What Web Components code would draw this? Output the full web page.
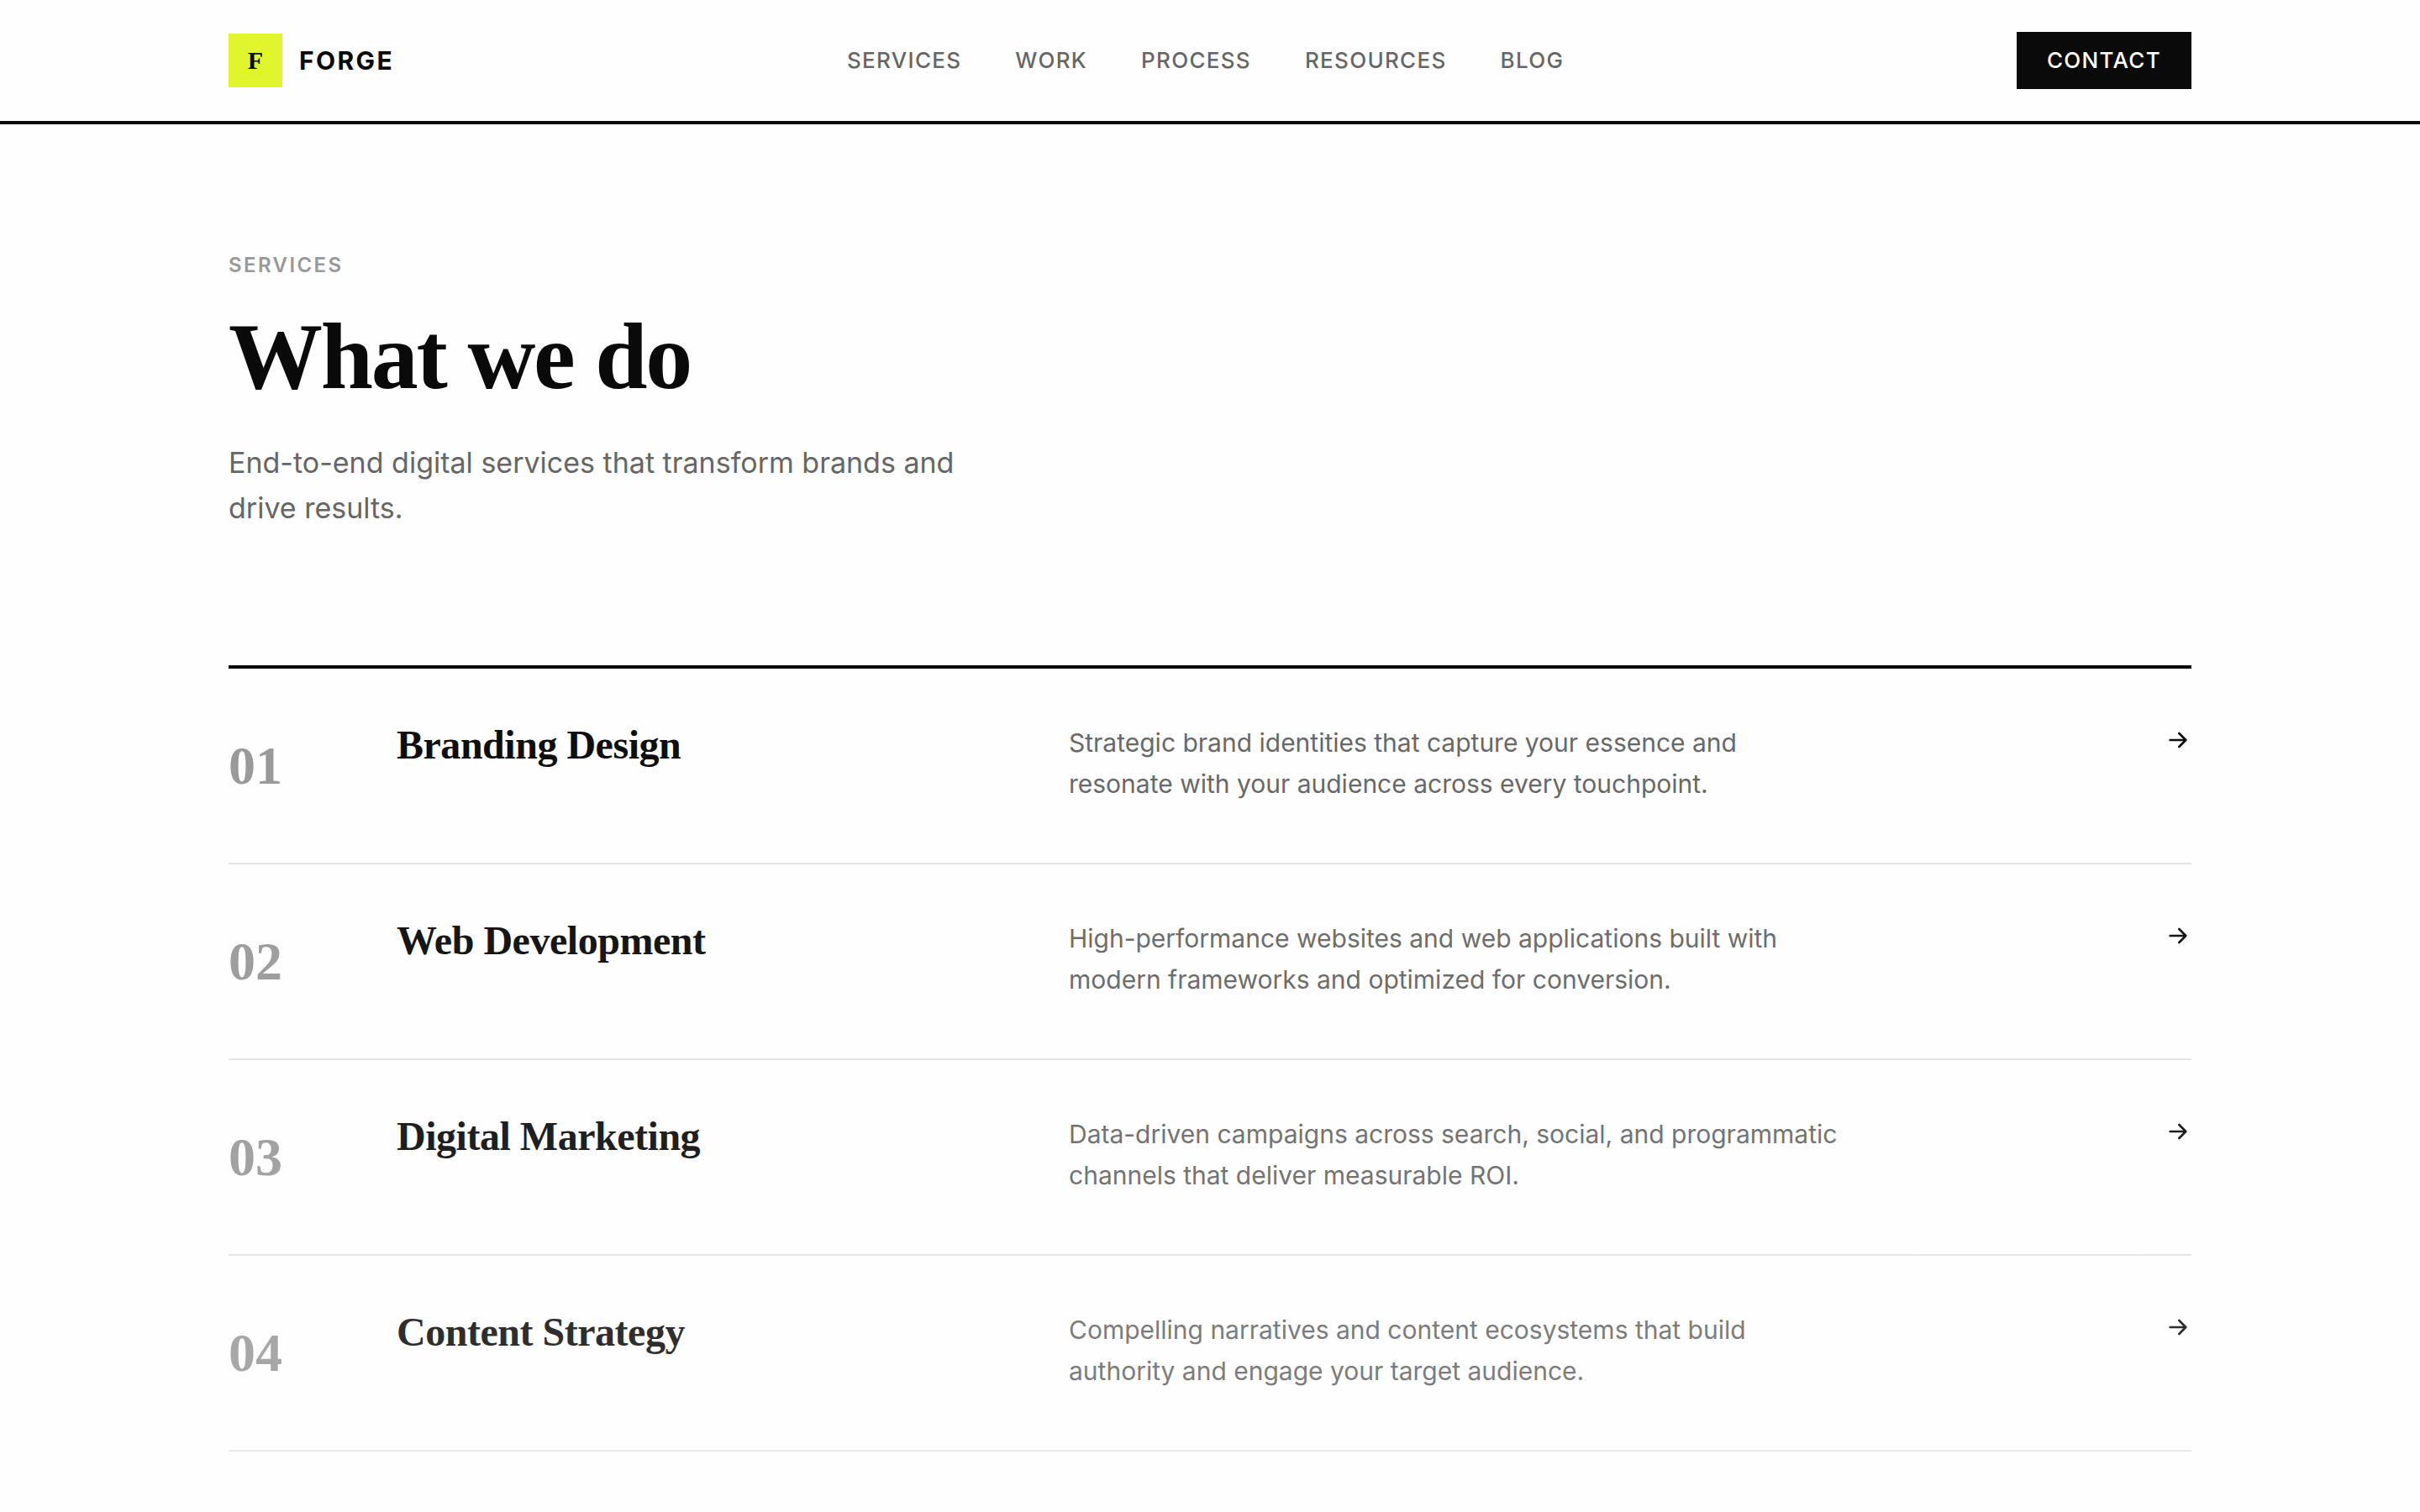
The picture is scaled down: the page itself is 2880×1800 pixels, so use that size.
<!DOCTYPE html>
<html lang="en">
<head>
<meta charset="utf-8">
<meta name="viewport" content="width=device-width, initial-scale=1">
<title>Forge – Services</title>
<style>
  :root {
    --ink: #0a0a0a;
    --muted: #666;
    --faint: #999;
    --line: #e2e2e2;
    --accent: #e1f52c;
    --paper: #fefefe;
    --serif: "Liberation Serif", serif;
  }
  body {
    margin: 0;
    background: var(--paper);
    color: var(--ink);
    font-family: Inter, sans-serif;
    -webkit-font-smoothing: antialiased;
    overflow-x: hidden;
  }
</style>
</head>
<body>
<forge-header>
  <forge-logo slot="logo">FORGE</forge-logo>
  <forge-link href="#services">SERVICES</forge-link>
  <forge-link href="#work">WORK</forge-link>
  <forge-link href="#process">PROCESS</forge-link>
  <forge-link href="#resources">RESOURCES</forge-link>
  <forge-link href="#blog">BLOG</forge-link>
  <forge-button slot="action">CONTACT</forge-button>
</forge-header>
<main>
  <forge-hero>
    <span slot="label">SERVICES</span>
    <span slot="title">What we do</span>
    End-to-end digital services that transform brands and drive results.
  </forge-hero>
  <forge-services>
    <forge-service number="01" name="Branding Design" style="--reveal: .98">Strategic brand identities that capture your essence and resonate with your audience across every touchpoint.</forge-service>
    <forge-service number="02" name="Web Development" style="--reveal: .95">High-performance websites and web applications built with modern frameworks and optimized for conversion.</forge-service>
    <forge-service number="03" name="Digital Marketing" style="--reveal: .91">Data-driven campaigns across search, social, and programmatic channels that deliver measurable ROI.</forge-service>
    <forge-service number="04" name="Content Strategy" style="--reveal: .85">Compelling narratives and content ecosystems that build authority and engage your target audience.</forge-service>
  </forge-services>
</main>

<script>
const define = (tag, markup) => customElements.define(tag, class extends HTMLElement {
  constructor() {
    super();
    this.attachShadow({ mode: 'open' }).innerHTML = markup;
  }
  connectedCallback() {
    const link = this.shadowRoot.querySelector('a[data-link]');
    if (link) link.href = this.getAttribute('href');
  }
});

const wrap = `
  .wrap { box-sizing: border-box; max-width: 2400px; margin: 0 auto; padding: 0 32px; }
`;

define('forge-logo', `
  <style>
    :host { display: block; }
    a { display: flex; align-items: center; gap: 20px; color: var(--ink); text-decoration: none;
        font-size: 30px; line-height: 48px; font-weight: 700; letter-spacing: 0.08em; }
    .mark { display: grid; place-items: center; width: 64px; height: 64px; background: var(--accent);
        font-family: var(--serif); font-size: 30px; letter-spacing: 0; }
  </style>
  <a href="#home"><span class="mark">F</span><span><slot></slot></span></a>
`);

define('forge-link', `
  <style>
    :host { display: block; }
    a { display: block; color: var(--muted); text-decoration: none; font-size: 26px; line-height: 42px;
        font-weight: 500; letter-spacing: 0.05em; }
  </style>
  <a data-link><slot></slot></a>
`);

define('forge-button', `
  <style>
    :host { display: block; }
    button { display: block; border: 0; margin: 0; padding: 18px 36px; background: var(--ink); color: #fff;
        font: 500 26px/32px Inter, sans-serif; letter-spacing: 0.05em; cursor: pointer; }
  </style>
  <button type="button"><slot></slot></button>
`);

define('forge-header', `
  <style>
    :host { display: block; border-bottom: 4px solid var(--ink); }
    ${wrap}
    .bar { display: flex; align-items: center; justify-content: space-between; min-height: 144px; }
    nav { display: flex; gap: 64px; }
  </style>
  <header class="wrap bar">
    <slot name="logo"></slot>
    <nav aria-label="Main"><slot></slot></nav>
    <slot name="action"></slot>
  </header>
`);

define('forge-hero', `
  <style>
    :host { display: block; padding: 148px 0 160px; }
    ${wrap}
    .label { margin: 0 0 26px; color: var(--faint); font-size: 24px; line-height: 40px;
        font-weight: 600; letter-spacing: 0.1em; }
    h1 { margin: 0 0 38px; font-family: var(--serif); font-size: 112px; line-height: 124px;
        font-weight: 700; letter-spacing: -0.02em; }
    .lead { margin: 0; max-width: 920px; color: var(--muted); font-size: 34px; line-height: 54px; }
  </style>
  <section class="wrap">
    <p class="label"><slot name="label"></slot></p>
    <h1><slot name="title"></slot></h1>
    <p class="lead"><slot></slot></p>
  </section>
`);

define('forge-services', `
  <style>
    :host { display: block; }
    ${wrap}
    .list { border-top: 4px solid var(--ink); }
  </style>
  <section class="wrap"><div class="list"><slot></slot></div></section>
`);

customElements.define('forge-service', class extends HTMLElement {
  constructor() {
    super();
    this.attachShadow({ mode: 'open' }).innerHTML = `
      <style>
        :host { display: block; opacity: var(--reveal, 1); }
        article { display: grid; grid-template-columns: 120px 2fr 3fr 176px; column-gap: 80px;
            align-items: start; padding: 64px 0; border-bottom: 2px solid var(--line); }
        .number { color: var(--faint); font: 700 64px/103px var(--serif); }
        h2 { margin: 0; font: 700 48px/54px var(--serif); letter-spacing: -0.01em; }
        p { margin: 0; max-width: 920px; color: var(--muted); font-size: 30px; line-height: 49px; }
        a { display: block; justify-self: end; padding-top: 5px; color: var(--ink); }
        svg { display: block; width: 32px; height: 32px; }
      </style>
      <article>
        <span class="number">${this.getAttribute('number')}</span>
        <h2>${this.getAttribute('name')}</h2>
        <p><slot></slot></p>
        <a href="#service-${this.getAttribute('number')}" aria-label="${this.getAttribute('name')}">
          <svg viewBox="0 0 24 24" fill="none" stroke="currentColor" stroke-width="2"
               stroke-linecap="round" stroke-linejoin="round" aria-hidden="true">
            <path d="M5 12h14M13 6l6 6-6 6"/>
          </svg>
        </a>
      </article>`;
  }
});
</script>
</body>
</html>
